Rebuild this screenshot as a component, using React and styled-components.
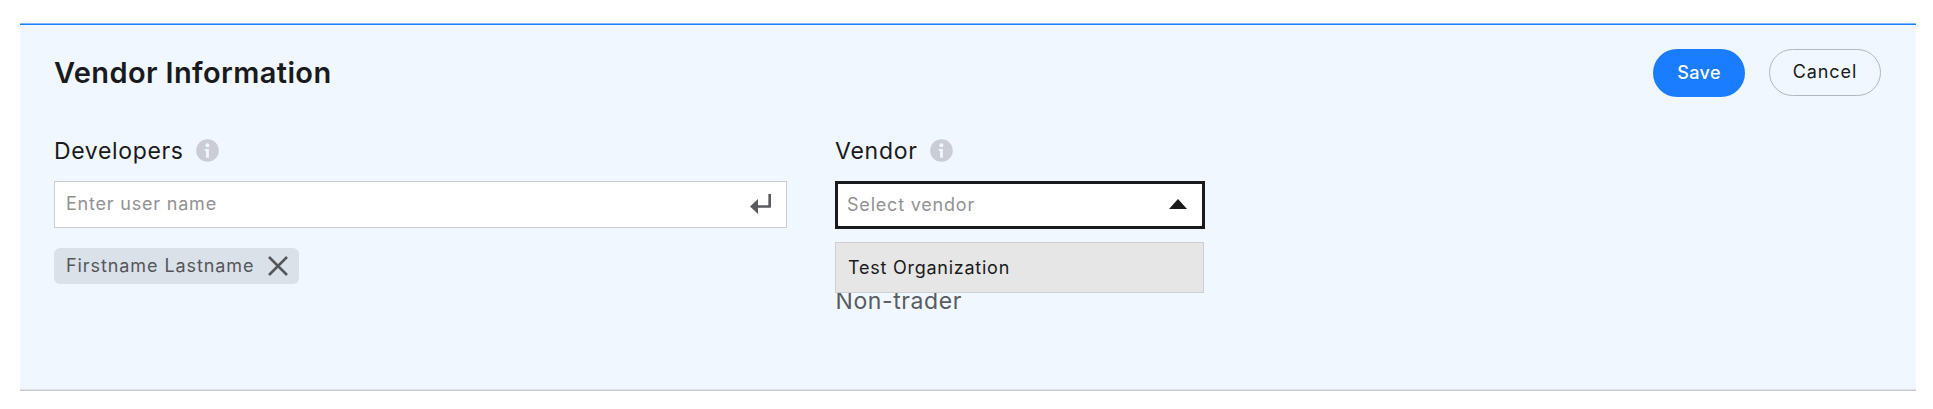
import React from "react";
import styled, { createGlobalStyle } from "styled-components";

const GlobalStyle = createGlobalStyle`
  * { box-sizing: border-box; }
  body {
    margin: 0;
    background: #fff;
    color: #1a1a1d;
    font-family: Inter, "Noto Sans", sans-serif;
    font-weight: 400;
  }
  button, input { font-family: inherit; }
`;

const Panel = styled.section`
  height: 368px;
  margin: 23px 17px 0 20px;
  padding: 25px 35px 0 34px;
  background: #f0f7ff;
  border-top: 1px solid #84b8ff;
  border-bottom: 1px solid #c5cad2;
  box-shadow: inset 0 1px #1a7cff, inset 0 -1px #dbe2ea;
`;

const Header = styled.header`
  display: flex;
  justify-content: space-between;
  align-items: flex-start;
  height: 48px;
`;

const Title = styled.h1`
  margin: 0;
  font-size: 29px;
  line-height: 47px;
  font-weight: 600;
  letter-spacing: 0.38px;
`;

const Actions = styled.div`
  display: flex;
  align-items: flex-start;
  gap: 24px;
`;

const Button = styled.button`
  width: ${(p) => (p.$primary ? 92 : 112)}px;
  height: ${(p) => (p.$primary ? 48 : 47)}px;
  padding: 0 0 ${(p) => (p.$primary ? 1 : 2)}px;
  border: ${(p) => (p.$primary ? "0" : "1px solid #b4b6c1")};
  border-radius: 24px;
  background: ${(p) => (p.$primary ? "#1a7cff" : "transparent")};
  color: ${(p) => (p.$primary ? "#fff" : "#1a1a1d")};
  font-size: 18px;
  font-weight: ${(p) => (p.$primary ? 500 : 400)};
  letter-spacing: ${(p) => (p.$primary ? 0.4 : 0.9)}px;
`;

const Fields = styled.div`
  display: grid;
  grid-template-columns: 733px 370px;
  column-gap: 48px;
  margin-top: 38px;
`;

const Field = styled.div`
  min-width: 0;
`;

const Label = styled.div`
  display: flex;
  align-items: center;
  gap: 12px;
  height: 32px;
  margin-bottom: 14px;
  font-size: 23px;
  letter-spacing: ${(p) => p.$spacing}px;

  svg { display: block; position: relative; top: -0.5px; }
`;

const InputBox = styled.div`
  display: flex;
  align-items: center;
  justify-content: space-between;
  height: 47px;
  padding: 0 15px 0 11px;
  background: #fff;
  border: 1px solid #cccccf;
`;

const SelectBox = styled(InputBox)`
  height: 48px;
  padding: 0 15px 0 9px;
  border: 3px solid #1a1a1d;
`;

const TextInput = styled.input`
  flex: 1;
  min-width: 0;
  padding: 0 0 2px;
  border: 0;
  outline: 0;
  background: transparent;
  color: #1a1a1d;
  font-size: 18px;
  font-weight: inherit;
  letter-spacing: ${(p) => p.$spacing}px;

  &::placeholder { color: #929295; opacity: 1; }
`;

const Chip = styled.div`
  display: flex;
  align-items: center;
  justify-content: space-between;
  width: 245px;
  height: 36px;
  margin-top: 20px;
  padding: 0 11px 0 12px;
  border-radius: 6px;
  background: #dae1e9;
  color: #555659;
  font-size: 18px;
  letter-spacing: 0.92px;
  white-space: nowrap;
`;

const ChipText = styled.span`
  padding-bottom: 2px;
`;

const Dropdown = styled.div`
  position: relative;
  z-index: 1;
  width: 369px;
  height: 51px;
  margin-top: 13px;
  padding-left: 12px;
  border: 1px solid #cecfd0;
  background: #e6e6e6;
  font-size: 18px;
  line-height: 50px;
  letter-spacing: 0.75px;
`;

const VendorStatus = styled.div`
  margin-top: -12px;
  padding-left: 0.5px;
  color: #5a5b5f;
  font-size: 23px;
  line-height: 40px;
  letter-spacing: 0.6px;
`;

const InfoIcon = () => (
  <svg width="23" height="23" viewBox="0 0 23 23">
    <circle cx="11.5" cy="11.5" r="11.3" fill="#cacdd6" />
    <circle cx="11.4" cy="6.2" r="2" fill="#f0f7ff" />
    <path d="M8.8 10h4.1v8.8h-2.8v-6.7H8.8z" fill="#f0f7ff" />
  </svg>
);

const EnterIcon = () => (
  <svg width="21" height="22" viewBox="0 0 21 22">
    <path d="M7.5 12.5H19.7V0" fill="none" stroke="#5a5b5e" strokeWidth="2.7" strokeLinejoin="round" />
    <path d="M0 12.5 8 5v15z" fill="#5a5b5e" />
  </svg>
);

const CloseIcon = () => (
  <svg width="20" height="20" viewBox="0 0 20 20">
    <path d="M1 1l18 18M19 1 1 19" stroke="#555659" strokeWidth="2.5" />
  </svg>
);

const ArrowUp = () => (
  <svg width="18" height="12" viewBox="0 0 18 12">
    <path d="M9 0l9 10H0z" fill="#1a1a1d" />
  </svg>
);

export default function App() {
  return (
    <>
      <GlobalStyle />
      <Panel>
        <Header>
          <Title>Vendor Information</Title>
          <Actions>
            <Button $primary>Save</Button>
            <Button>Cancel</Button>
          </Actions>
        </Header>
        <Fields>
          <Field>
            <Label $spacing={0.65}>Developers <InfoIcon /></Label>
            <InputBox>
              <TextInput placeholder="Enter user name" $spacing={0.8} />
              <EnterIcon />
            </InputBox>
            <Chip><ChipText>Firstname Lastname</ChipText><CloseIcon /></Chip>
          </Field>
          <Field>
            <Label $spacing={0.75}>Vendor <InfoIcon /></Label>
            <SelectBox>
              <TextInput placeholder="Select vendor" $spacing={0.8} />
              <ArrowUp />
            </SelectBox>
            <Dropdown>Test Organization</Dropdown>
            <VendorStatus>Non-trader</VendorStatus>
          </Field>
        </Fields>
      </Panel>
    </>
  );
}
